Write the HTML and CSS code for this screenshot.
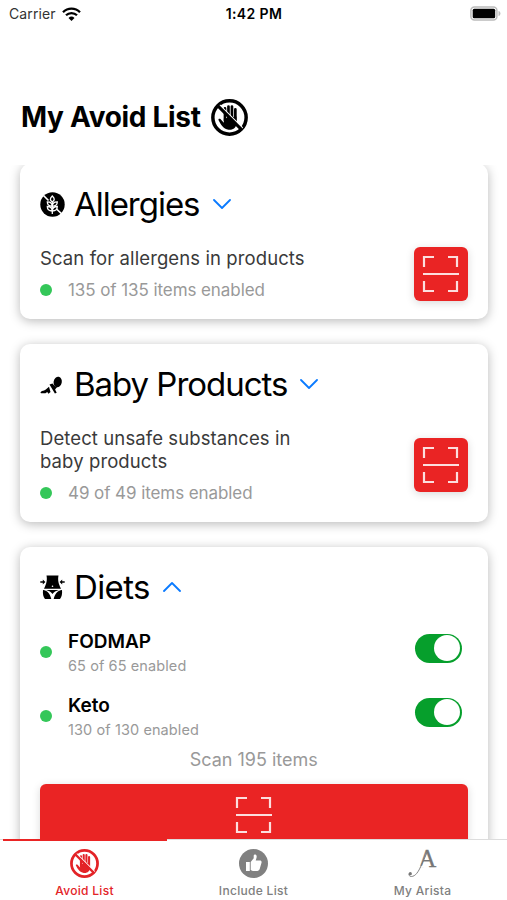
FILE: index.html
```html
<!DOCTYPE html>
<html lang="en">
<head>
    <meta charset="UTF-8">
    <meta name="viewport" content="width=device-width, initial-scale=1.0">
    <title>My Avoid List</title>
    <link rel="stylesheet" href="styles.css">
</head>
<body>
    <!-- shared icons -->
    <svg class="defs">
        <symbol id="no-touch" viewBox="0 0 36 36">
            <circle cx="18" cy="18" r="16.2" fill="none" stroke="currentColor" stroke-width="3.4"/>
            <path d="M13.6 9v12M17 7.4v12M20.4 7.4v13M23.7 10v13" stroke="currentColor" stroke-width="2.6" stroke-linecap="round"/>
            <path d="M12.5 19v4L9.4 19.6c-1-1-2.8-.4-2 1 2 4 4.4 8 8.7 9 5 1 8.7-1.6 8.7-6.6V17z" fill="currentColor"/>
            <path d="M8.4 5.8L30.8 28.2" stroke="#fff" stroke-width="1.3"/>
            <path d="M6.5 6.5l23 23" stroke="currentColor" stroke-width="3"/>
        </symbol>
        <symbol id="scan" viewBox="0 0 38 38">
            <path d="M2 12V2h10M26 2h9v10M2 26v10h10M26 36h9V26" fill="none" stroke="#fff" stroke-opacity=".85" stroke-width="2.2"/>
            <path d="M1 19h36" stroke="#fff" stroke-opacity=".85" stroke-width="2.2"/>
        </symbol>
    </svg>

    <div class="status-bar">
        <div class="carrier">
            <span>Carrier</span>
            <svg width="19" height="14" viewBox="0 0 19 14" fill="none" stroke="#000" stroke-width="2.3">
                <path d="M1 5.2a12 12 0 0 1 17 0M4 8.3a7.8 7.8 0 0 1 11 0"/>
                <path d="M6.5 10.9a4.3 4.3 0 0 1 6 0l-3 3z" fill="#000" stroke="none"/>
            </svg>
        </div>
        <div class="time">1:42 PM</div>
        <div class="battery-wrap">
            <svg width="31" height="15" viewBox="0 0 31 15">
                <rect x=".9" y=".9" width="26" height="13" rx="3.5" fill="#fff" stroke="#bbb" stroke-width="1.5"/>
                <rect x="2.7" y="2.7" width="22.5" height="9.5" rx="1.5"/>
                <path d="M28.5 5c2.6.6 2.6 4.400 0 5z" fill="#bbb"/>
            </svg>
        </div>
    </div>

    <div class="page-title">
        <h1>My Avoid List</h1>
        <svg width="37" height="37"><use href="#no-touch"/></svg>
    </div>

    <div class="list">
        <div class="card first">
            <div class="card-head">
                <svg class="card-icon" viewBox="0 0 25 25">
                    <circle cx="12.5" cy="12.5" r="12.2"/>
                    <g fill="none" stroke="#fff" stroke-width="1.3">
                        <path d="M3.5 3.5l5 5M16.5 17l5.5 5.2" stroke-width="1.6"/>
                        <path d="M12.3 10v12M12.3 4c-2.6 2.5-2.6 4.2 0 6 2.6-1.8 2.6-3.5 0-6z"/>
                        <path d="M12.3 14.3c-3.8 0-5-1.4-5-4.5 3 0 5 1.3 5 4.5zM12.3 14.3c3.8 0 5-1.4 5-4.5-3 0-5 1.3-5 4.5z"/>
                        <path d="M12.3 19c-3.8 0-5-1.4-5-4.5 3 0 5 1.3 5 4.5zM12.3 19c3.8 0 5-1.4 5-4.5-3 0-5 1.3-5 4.5z"/>
                    </g>
                </svg>
                <h2>Allergies</h2>
                <svg class="chevron" viewBox="0 0 18 10"><path d="M1 1l8 8 8-8"/></svg>
            </div>
            <div class="card-body">
                <div class="info">
                    <p class="desc">Scan for allergens in products</p>
                    <div class="enabled"><span class="dot"></span>135 of 135 items enabled</div>
                </div>
                <button class="scan-btn"><svg width="38" height="38"><use href="#scan"/></svg></button>
            </div>
        </div>

        <div class="card">
            <div class="card-head">
                <svg class="card-icon" viewBox="0 0 25 25">
                    <ellipse cx="17.7" cy="10" rx="4.1" ry="5.3" transform="rotate(12 17.7 10)"/>
                    <path d="M.8 20c1.4-1.7 3.6-1.1 5-2.5l3.2-2.7 1.5 5.2-2 1.7-1.3-1.8-1.7 1.3H1.2c-.8 0-.9-.7-.4-1.2z"/>
                    <path d="M9.5 12.5l3-.9c2 2.5 3.5 3.5 4.6 3.3l-2 2.5 1.6 3.3-1.8.7z"/>
                </svg>
                <h2>Baby Products</h2>
                <svg class="chevron" viewBox="0 0 18 10"><path d="M1 1l8 8 8-8"/></svg>
            </div>
            <div class="card-body">
                <div class="info">
                    <p class="desc">Detect unsafe substances in<br>baby products</p>
                    <div class="enabled"><span class="dot"></span>49 of 49 items enabled</div>
                </div>
                <button class="scan-btn"><svg width="38" height="38"><use href="#scan"/></svg></button>
            </div>
        </div>

        <div class="card">
            <div class="card-head">
                <svg class="card-icon" viewBox="0 0 25 25">
                    <path d="M6.5.5h12c-.8 4.2-.3 7.5 2.5 13.2H4C6.8 8 7.3 4.7 6.5.5z"/>
                    <path d="M3 15c4 .5 7 3.2 8.3 9H5c-1.700-2-2.400-5-2-9zM22 15c-4 .5-7 3.2-8.3 9H20c1.700-2 2.400-5 2-9zM6 15h13c-3 .8-5.300 2-6.500 4C11.300 17 9 15.800 6 15z"/>
                    <path d="M.3 6.2h2.5V4.600l2.600 2.400-2.600 2.400V7.800H.3zM24.700 6.200h-2.500V4.600L19.600 7l2.600 2.400V7.800h2.500z"/>
                    <circle cx="12.5" cy="11.3" r=".8" fill="#fff"/>
                </svg>
                <h2 class="short">Diets</h2>
                <svg class="chevron" viewBox="0 0 18 10"><path d="M1 9l8-8 8 8"/></svg>
            </div>
            <div class="diets">
                <div class="diet">
                    <span class="dot"></span>
                    <div class="diet-info">
                        <h3>FODMAP</h3>
                        <p>65 of 65 enabled</p>
                    </div>
                    <span class="toggle"></span>
                </div>
                <div class="diet">
                    <span class="dot"></span>
                    <div class="diet-info">
                        <h3>Keto</h3>
                        <p>130 of 130 enabled</p>
                    </div>
                    <span class="toggle"></span>
                </div>
            </div>
            <p class="scan-count">Scan 195 items</p>
            <button class="scan-btn wide"><svg width="38" height="38"><use href="#scan"/></svg></button>
        </div>
    </div>

    <div class="tab-bar">
        <div class="tab active">
            <svg width="29" height="29"><use href="#no-touch"/></svg>
            <span>Avoid List</span>
        </div>
        <div class="tab">
            <svg width="29" height="29" viewBox="0 0 29 29">
                <circle cx="14.5" cy="14.5" r="14.5" fill="#808080"/>
                <path d="M7 13h3.8v9H7zM11.7 13l3-3.8V6.4c.2-1.6 2.9-1.2 3 .8 0 1.6-.6 3-1 4.3h4.2c1.3 0 2 1 1.6 2.2l-1.8 6.4c-.4 1.2-1.2 1.8-2.4 1.8h-4.4c-1 0-1.6-.3-2.2-.8z" fill="#fff"/>
            </svg>
            <span>Include List</span>
        </div>
        <div class="tab">
            <svg class="arista" width="29" height="29" viewBox="0 0 29 29">
                <text x="10.2" y="18">A</text>
                <!-- left leg runs on into the swash -->
                <path d="M9.5 16.8h8v2h-8z" fill="#fff"/>
                <path d="M19.5 2.5L13 17C10.5 22.5 7.5 27.5 3.3 27.5c-1.900 0-2.700-1.400-2.200-3" fill="none" stroke="#777" stroke-width=".9"/>
                <circle cx="2.3" cy="24.7" r="1.6" fill="#777"/>
            </svg>
            <span>My Arista</span>
        </div>
    </div>
</body>
</html>
```
FILE: styles.css
```css
* { margin: 0; padding: 0; box-sizing: border-box; }
body {
    display: flex;
    flex-direction: column;
    height: 900px;
    background: #fff;
    font-family: Inter, "Liberation Sans", sans-serif;
    color: #000;
    overflow: hidden;
}
svg { display: block; flex: none; }
.defs { display: none; }

.status-bar {
    display: flex;
    align-items: center;
    height: 27px;
    padding: 0 6px 0 9px;
    font-size: 14px;
}
.carrier, .battery-wrap { flex: 1; display: flex; align-items: center; gap: 6px; }
.carrier { color: #333; letter-spacing: 0.1px; }
.battery-wrap { justify-content: flex-end; }
.time { margin-right: 2px; font-weight: 600; font-size: 14px; letter-spacing: 0.4px; }

.page-title {
    display: flex;
    align-items: center;
    gap: 10px;
    height: 138px;
    padding: 42px 21px 0;
}
h1 { font-size: 28px; font-weight: 700; letter-spacing: -0.3px; }

.list {
    flex: 1;
    min-height: 0;
    overflow: hidden;
    padding: 0 19.5px 0 20px;
}
.card {
    background: #fff;
    border-radius: 10px;
    padding: 20px;
    margin-bottom: 24.5px;
    box-shadow: 0 2px 11px rgba(0, 0, 0, 0.28);
}
.card.first { margin-top: -1.5px; }
.card-head { display: flex; align-items: center; height: 41px; }
.card-icon { width: 25px; height: 25px; margin-right: 9px; }
h2 { font-size: 33px; font-weight: 400; line-height: 41px; letter-spacing: -1.03px; white-space: nowrap; }
h2.short { letter-spacing: -0.6px; }
.chevron {
    width: 18px;
    height: 10px;
    margin-left: 13px;
    fill: none;
    stroke: #0a7aff;
    stroke-width: 1.8;
    stroke-linecap: round;
    stroke-linejoin: round;
}
.card-body {
    display: flex;
    align-items: center;
    justify-content: space-between;
    margin-top: 22px;
    margin-bottom: -3px;
}
.desc {
    font-size: 18.5px;
    line-height: 23.5px;
    letter-spacing: 0.1px;
    color: #3a3a3a;
    white-space: nowrap;
}
.enabled {
    display: flex;
    align-items: center;
    margin-top: 7.5px;
    line-height: 24px;
    font-size: 17px;
    letter-spacing: -0.08px;
    color: #999;
}
.dot { flex: none; width: 12px; height: 12px; margin-right: 16px; border-radius: 50%; background: #34c759; }
.scan-btn {
    display: flex;
    align-items: center;
    justify-content: center;
    width: 54px;
    height: 54px;
    margin-bottom: 1.5px;
    border: none;
    border-radius: 6px;
    background: #ea2424;
    box-shadow: 0 2px 9px rgba(0, 0, 0, 0.15);
}
.scan-btn.wide { width: 100%; height: 62px; margin: 12px 0 0; }

.diets { padding-top: 18px; }
.diet { display: flex; align-items: flex-start; height: 64px; padding-right: 6px; }
.diet .dot { margin-top: 20px; }
.diet-info { flex: 1; padding-top: 3px; }
h3 { font-size: 19px; font-weight: 600; line-height: 25px; }
.diet-info p { font-size: 14.5px; line-height: 23px; letter-spacing: 0.1px; color: #999; }
.toggle {
    width: 47px;
    height: 29px;
    margin-top: 8px;
    padding: 1.5px;
    border-radius: 15px;
    background: #069f2c;
}
.toggle::after {
    content: "";
    display: block;
    width: 26px;
    height: 26px;
    margin-left: auto;
    border-radius: 50%;
    background: #fff;
}
.scan-count { margin-top: -6px; text-align: center; font-size: 18px; line-height: 24px; color: #999; }

.tab-bar {
    position: relative;
    display: flex;
    height: 61px;
    border-top: 1px solid #ddd;
    background: #fff;
}
.tab {
    flex: 1;
    display: flex;
    flex-direction: column;
    align-items: center;
    padding-top: 9px;
    gap: 5px;
    font-size: 12px;
    font-weight: 500;
    line-height: 16px;
    letter-spacing: 0.3px;
    color: #808080;
}
.tab.active { color: #e32327; }
/* active indicator over the top border */
.tab.active::before {
    content: "";
    position: absolute;
    top: -1px;
    left: 3px;
    width: 164px;
    height: 2px;
    background: #ea2424;
}
.arista { overflow: visible; }
.arista text { font-family: "Liberation Serif", serif; font-size: 25px; fill: #777; stroke: #777; stroke-width: 0.3px; }
```
